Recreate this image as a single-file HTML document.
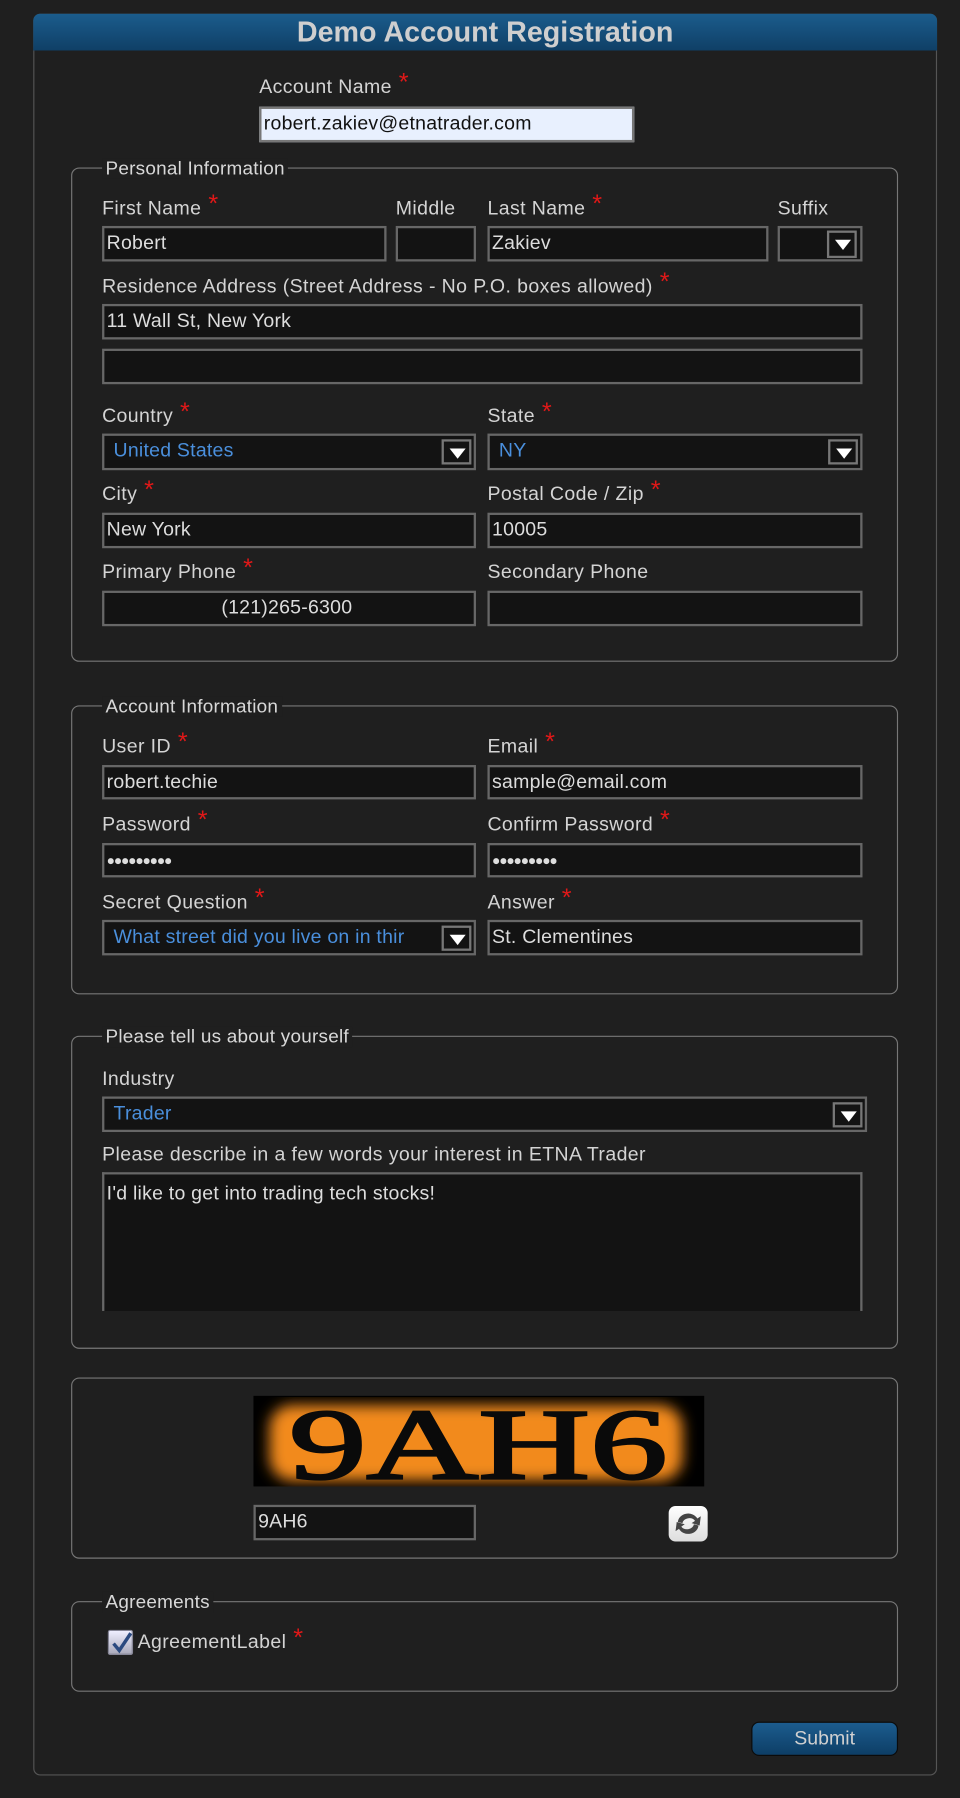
<!DOCTYPE html>
<html><head><meta charset="utf-8"><style>
html,body{margin:0;padding:0;width:960px;height:1798px;overflow:hidden;background:#1f1f1f;}
#w{position:absolute;left:0;top:0;width:837px;height:1568px;transform:scale(1.14695);transform-origin:0 0;font-family:"Liberation Sans",sans-serif;color:#d4d4d4;}
#w div{position:absolute;box-sizing:border-box;}
.panel{left:29px;top:12px;width:788px;height:1536px;border:1px solid #555;border-radius:6px;}
.hdr{left:29px;top:12px;width:788px;height:32px;border-radius:6px 6px 0 0;background:linear-gradient(#1b5c8c,#0f3f66);text-align:center;font-size:25px;font-weight:bold;color:#cfcfcf;line-height:32px;}
.fs{border:1.5px solid #777;border-radius:7px;}
.lg{background:#1f1f1f;padding:0 3px;font-size:16.5px;letter-spacing:0.2px;line-height:18px;color:#d8d8d8;}
.lb{font-size:17px;letter-spacing:0.35px;line-height:20px;color:#d4d4d4;white-space:nowrap;}
.lb b{color:#e01818;font-weight:normal;font-size:22px;line-height:0;vertical-align:top;position:relative;top:6px;margin-left:6px;}
.in{background:#131313;border:2px solid #676767;font-size:17px;letter-spacing:0.2px;line-height:26px;padding-left:2px;color:#ddd;white-space:nowrap;overflow:hidden;}
.sel{color:#4a8fdc;padding-left:8px;}
.ar{position:absolute;right:2px;top:3px;width:26px;height:22px;border:2px solid #777;background:#131313;}
.ar:after{content:"";position:absolute;left:5px;top:6px;border-left:7px solid transparent;border-right:7px solid transparent;border-top:9px solid #fff;}
</style></head><body><div id="w">
<div class="panel"></div>
<div class="hdr">Demo Account Registration</div>

<div class="lb" style="left:226px;top:66px">Account Name<b>*</b></div>
<div class="in" style="left:226px;top:93px;width:327px;height:31px;background:#e8f0fe;border-color:#777;color:#111">robert.zakiev@etnatrader.com</div>

<div class="fs" style="left:62px;top:146px;width:721px;height:431px"></div>
<div class="lg" style="left:89px;top:138px">Personal Information</div>
<div class="lb" style="left:89px;top:172px">First Name<b>*</b></div>
<div class="lb" style="left:345px;top:172px">Middle</div>
<div class="lb" style="left:425px;top:172px">Last Name<b>*</b></div>
<div class="lb" style="left:678px;top:172px">Suffix</div>
<div class="in" style="left:89px;top:197px;width:248px;height:31px">Robert</div>
<div class="in" style="left:345px;top:197px;width:70px;height:31px"></div>
<div class="in" style="left:425px;top:197px;width:245px;height:31px">Zakiev</div>
<div class="in" style="left:678px;top:197px;width:74px;height:31px"><div class="ar" style="top:2px;right:3px;width:26px;height:24px"></div></div>
<div class="lb" style="left:89px;top:240px">Residence Address (Street Address - No P.O. boxes allowed)<b>*</b></div>
<div class="in" style="left:89px;top:265px;width:663px;height:31px">11 Wall St, New York</div>
<div class="in" style="left:89px;top:304px;width:663px;height:31px"></div>
<div class="lb" style="left:89px;top:353px">Country<b>*</b></div>
<div class="lb" style="left:425px;top:353px">State<b>*</b></div>
<div class="in sel" style="left:89px;top:378px;width:326px;height:32px">United States<div class="ar"></div></div>
<div class="in sel" style="left:425px;top:378px;width:327px;height:32px">NY<div class="ar"></div></div>
<div class="lb" style="left:89px;top:421px">City<b>*</b></div>
<div class="lb" style="left:425px;top:421px">Postal Code / Zip<b>*</b></div>
<div class="in" style="left:89px;top:447px;width:326px;height:31px">New York</div>
<div class="in" style="left:425px;top:447px;width:327px;height:31px">10005</div>
<div class="lb" style="left:89px;top:489px">Primary Phone<b>*</b></div>
<div class="lb" style="left:425px;top:489px">Secondary Phone</div>
<div class="in" style="left:89px;top:515px;width:326px;height:31px;padding-left:102px">(121)265-6300</div>
<div class="in" style="left:425px;top:515px;width:327px;height:31px"></div>

<div class="fs" style="left:62px;top:615px;width:721px;height:252px"></div>
<div class="lg" style="left:89px;top:607px">Account Information</div>
<div class="lb" style="left:89px;top:641px">User ID<b>*</b></div>
<div class="lb" style="left:425px;top:641px">Email<b>*</b></div>
<div class="in" style="left:89px;top:667px;width:326px;height:30px">robert.techie</div>
<div class="in" style="left:425px;top:667px;width:327px;height:30px">sample@email.com</div>
<div class="lb" style="left:89px;top:709px">Password<b>*</b></div>
<div class="lb" style="left:425px;top:709px">Confirm Password<b>*</b></div>
<div class="in" style="left:89px;top:735px;width:326px;height:30px;font-size:12px;letter-spacing:-1px">●●●●●●●●●</div>
<div class="in" style="left:425px;top:735px;width:327px;height:30px;font-size:12px;letter-spacing:-1px">●●●●●●●●●</div>
<div class="lb" style="left:89px;top:777px">Secret Question<b>*</b></div>
<div class="lb" style="left:425px;top:777px">Answer<b>*</b></div>
<div class="in sel" style="left:89px;top:802px;width:326px;height:31px">What street did you live on in thir<div class="ar" style="background:#131313"></div></div>
<div class="in" style="left:425px;top:802px;width:327px;height:31px">St. Clementines</div>

<div class="fs" style="left:62px;top:903px;width:721px;height:273px"></div>
<div class="lg" style="left:89px;top:895px">Please tell us about yourself</div>
<div class="lb" style="left:89px;top:931px">Industry</div>
<div class="in sel" style="left:89px;top:956px;width:667px;height:31px">Trader<div class="ar"></div></div>
<div class="lb" style="left:89px;top:997px">Please describe in a few words your interest in ETNA Trader</div>
<div class="in" style="left:89px;top:1022px;width:663px;height:121px;border-bottom:none;line-height:22px;padding-top:6px">I'd like to get into trading tech stocks!</div>

<div class="fs" style="left:62px;top:1201px;width:721px;height:158px"></div>
<div style="left:221px;top:1217px;width:393px;height:79px;background:#000">
<svg width="393" height="79" viewBox="0 0 393 79" style="position:absolute;left:0;top:0">
<defs><filter id="b"><feGaussianBlur stdDeviation="6"/></filter></defs>
<rect x="14" y="8" width="360" height="66" rx="20" fill="#f28a1c" filter="url(#b)"/>
<text x="196" y="72" text-anchor="middle" font-family="Liberation Serif,serif" font-size="88" fill="#0a0a0a" stroke="#0a0a0a" stroke-width="2" textLength="330" lengthAdjust="spacingAndGlyphs">9AH6</text>
</svg></div>
<div class="in" style="left:221px;top:1312px;width:194px;height:31px">9AH6</div>
<div style="left:583px;top:1313px;width:34px;height:31px;background:linear-gradient(#fff,#ddd);border-radius:6px">
<svg width="34" height="31" viewBox="0 0 34 31" style="position:absolute;left:0;top:0"><path d="M8 14 A9 8 0 0 1 25 11 L28 9 L27 17 L20 15 L23 13 A6 5 0 0 0 12 15 Z" fill="#444"/><path d="M26 17 A9 8 0 0 1 9 20 L6 22 L7 14 L14 16 L11 18 A6 5 0 0 0 22 16 Z" fill="#444"/></svg></div>

<div class="fs" style="left:62px;top:1396px;width:721px;height:79px"></div>
<div class="lg" style="left:89px;top:1388px">Agreements</div>
<div style="left:94px;top:1421px;width:22px;height:22px;background:linear-gradient(#eef,#aab);border:1px solid #889;border-radius:2px">
<svg width="22" height="22" style="position:absolute;left:0;top:0"><path d="M4 11 L9 17 L19 2" stroke="#2b4a80" stroke-width="3" fill="none"/></svg></div>
<div class="lb" style="left:120px;top:1422px">AgreementLabel<b>*</b></div>

<div style="left:655px;top:1501px;width:128px;height:30px;border-radius:7px;background:linear-gradient(#1c5c8e,#0d3e66);border:1px solid #0b0b0b;text-align:center;font-size:17px;line-height:28px;color:#d0d0d0">Submit</div>
</div></body></html>
